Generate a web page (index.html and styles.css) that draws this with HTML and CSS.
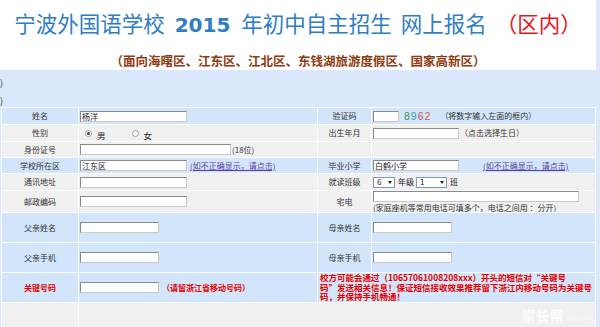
FILE: index.html
```html
<!DOCTYPE html>
<html lang="zh-CN">
<head>
  <meta charset="UTF-8">
  <title>宁波外国语学校 2015 年初中自主招生 网上报名</title>
  <link rel="stylesheet" href="styles.css">
</head>
<body>
  <div class="page">
    <div class="head">
      <h1 class="title">宁波外国语学校<b class="year">2015</b>年初中自主招生<span class="gap">网上报名</span><span class="zone">（区内）</span></h1>
      <p class="sub">（面向海曙区、江东区、江北区、东钱湖旅游度假区、国家高新区）</p>
    </div>
    <div class="band">
      <div>)</div>
      <div>)</div>
    </div>

    <div class="form">
      <!-- 第1行 -->
      <div class="cell lab blue">姓名</div>
      <div class="cell blue"><input class="ipt ipt-m" type="text" value="杨洋"></div>
      <div class="cell lab blue">验证码</div>
      <div class="cell blue">
        <input class="ipt ipt-code" type="text">
        <span class="code"><i class="c1">8</i><i class="c2">9</i><i class="c3">6</i><i class="c4">2</i></span>
        <span class="tip tip-code">（将数字输入左面的框内）</span>
      </div>

      <!-- 第2行 -->
      <div class="cell lab grey">性别</div>
      <div class="cell grey sex">
        <span class="radio on"></span><span class="sex-txt">男</span>
        <span class="radio radio-f"></span><span class="sex-txt">女</span>
      </div>
      <div class="cell lab grey">出生年月</div>
      <div class="cell grey"><input class="ipt ipt-date" type="text"><span class="tip">（点击选择生日）</span></div>

      <!-- 第3行 -->
      <div class="cell lab grey">身份证号</div>
      <div class="cell grey"><input class="ipt ipt-l" type="text"><span class="tip">(18位)</span></div>
      <div class="cell grey"></div>
      <div class="cell grey"></div>

      <!-- 第4行 -->
      <div class="cell lab blue">学校所在区</div>
      <div class="cell blue"><input class="ipt ipt-m" type="text" value="江东区"><a class="fix" href="#">(如不正确显示，请点击)</a></div>
      <div class="cell lab blue">毕业小学</div>
      <div class="cell blue"><input class="ipt ipt-date" type="text" value="白鹤小学"><a class="fix fix-r" href="#">(如不正确显示，请点击)</a></div>

      <!-- 第5行 -->
      <div class="cell lab grey">通讯地址</div>
      <div class="cell grey"><input class="ipt ipt-m" type="text"></div>
      <div class="cell lab grey">就读班级</div>
      <div class="cell grey">
        <span class="sel">6<i class="arr"></i></span><span class="unit">年级</span>
        <span class="sel sel-w">1<i class="arr"></i></span><span class="unit">班</span>
      </div>

      <!-- 第6行 -->
      <div class="cell lab grey">邮政编码</div>
      <div class="cell grey"><input class="ipt ipt-m" type="text"></div>
      <div class="cell lab grey">宅电</div>
      <div class="cell grey tel">
        <input class="ipt ipt-tel" type="text">
        <span class="tip-tel">(家庭座机等常用电话可填多个，电话之间用 ：分开)</span>
      </div>

      <!-- 家长 -->
      <div class="cell lab blue">父亲姓名</div>
      <div class="cell blue"><input class="ipt ipt-s" type="text"></div>
      <div class="cell lab blue">母亲姓名</div>
      <div class="cell blue"><input class="ipt ipt-s" type="text"></div>

      <div class="cell lab blue">父亲手机</div>
      <div class="cell blue"><input class="ipt ipt-s" type="text"></div>
      <div class="cell lab blue">母亲手机</div>
      <div class="cell blue"><input class="ipt ipt-s" type="text"></div>

      <div class="cell lab blue key">关键号码</div>
      <div class="cell blue"><input class="ipt ipt-s" type="text"><span class="key-tip">（请留浙江省移动号码）</span></div>
      <div class="cell blue notice span2">校方可能会通过（10657061008208xxx）开头的短信对“关键号<br>码”发送相关信息！保证短信接收效果推荐留下浙江内移动号码为关键号<br>码，并保持手机畅通！</div>

      <div class="cell grey"></div>
      <div class="cell grey span3"></div>
    </div>

    <div class="mark">家长帮<small>jzb.com</small></div>
  </div>
</body>
</html>
```

FILE: styles.css
```css
body {
  margin: 0;
  background: #dbe8fb;
  font-family: "Noto Sans CJK SC", "Liberation Sans", sans-serif;
  color: #222;
}
.page {
  position: relative;
  height: 327px;
  overflow: hidden;
}
.head {
  width: 596px;
  height: 70px;
  background: #fff;
}
.title {
  margin: 0;
  padding-top: 10px;
  font-size: 21.5px;
  font-weight: normal;
  line-height: 26px;
  color: #2f7dc4;
  text-align: center;
  white-space: nowrap;
}
.year {
  font-family: "DejaVu Sans", sans-serif;
  font-size: 20px;
  margin: 0 11px 0 10px;
}
.gap {
  margin-left: 9px;
}
.zone {
  margin-left: 9px;
  color: #e8141c;
}
.sub {
  margin: 15px 0 0;
  font-size: 12.5px;
  font-weight: bold;
  line-height: 16px;
  color: #8e3a12;
  text-align: center;
  white-space: nowrap;
}
.band {
  height: 37px;
  box-sizing: border-box;
  padding-top: 4px;
  font-size: 9px;
  line-height: 18px;
  color: #333;
}

/* 报名表 */
.form {
  display: grid;
  grid-template-columns: 76px 238px 53px 223px;
  grid-template-rows: 16px 16px 15px 15px 16px 21px 29px 29px 29px 30px;
  gap: 1px;
  padding: 1px;
  margin-left: 1px;
  width: 595px;
  box-sizing: border-box;
  background: #fbfcfe;
}
.cell {
  display: flex;
  align-items: center;
  padding: 0 1px;
  font-size: 8px;
  line-height: 10px;
  white-space: nowrap;
  overflow: hidden;
}
.blue {
  background: #d2e5fa;
}
.grey {
  background: #f0f0f0;
}
.lab {
  justify-content: center;
  color: #333;
}
.span2 {
  grid-column: span 2;
}
.span3 {
  grid-column: span 3;
}

.ipt {
  height: 11px;
  box-sizing: border-box;
  margin: 0;
  padding: 0 1px;
  border: 1px solid #c9c9c9;
  border-top-color: #8a8a8a;
  border-left-color: #8a8a8a;
  background: #fff;
  font-family: "Noto Sans CJK SC", sans-serif;
  font-size: 8px;
  color: #222;
  outline: none;
}
.ipt-m { width: 107px; }
.ipt-l { width: 151px; }
.ipt-s { width: 79px; }
.ipt-code { width: 26px; }
.ipt-date { width: 86px; }
.ipt-tel { width: 206px; }

.tip {
  margin-left: 1px;
  color: #333;
}
.tip-code {
  margin-left: 9px;
}
.code {
  margin-left: 5px;
  font-family: "Liberation Sans", sans-serif;
  font-size: 10.5px;
  letter-spacing: 1px;
}
.code i {
  font-style: normal;
}
.c1 { color: #3d9b52; }
.c2 { color: #3a9aa6; }
.c3 { color: #d2506e; }
.c4 { color: #c8643c; }

.fix {
  margin-left: 3px;
  color: #5b3c9e;
}
.fix-r {
  margin-left: 24px;
}

.sex {
  padding-left: 6px;
}
.radio {
  position: relative;
  width: 5px;
  height: 5px;
  border: 1px solid #a3a3a3;
  border-radius: 50%;
  background: #f7f7f7;
}
.radio.on::after {
  content: "";
  position: absolute;
  left: 1px;
  top: 1px;
  width: 3px;
  height: 3px;
  border-radius: 50%;
  background: #444;
}
.radio-f {
  margin-left: 26px;
}
.sex-txt {
  margin: 3px 0 0 5px;
  font-size: 8.5px;
}

.sel {
  display: inline-flex;
  align-items: center;
  justify-content: space-between;
  width: 22px;
  height: 11px;
  box-sizing: border-box;
  padding: 0 2px 0 3px;
  border: 1px solid #7f98b8;
  background: #fff;
  font-size: 8px;
}
.sel-w {
  width: 31px;
}
.arr {
  width: 0;
  height: 0;
  border-top: 3px solid #222;
  border-left: 2px solid transparent;
  border-right: 2px solid transparent;
}
.unit {
  margin: 0 2px 0 3px;
}

.tel {
  flex-direction: column;
  align-items: flex-start;
  justify-content: flex-start;
}
.tip-tel {
  margin-top: 1px;
  line-height: 9px;
  color: #333;
}

.key {
  color: #e60000;
  font-weight: bold;
}
.key-tip {
  margin-left: 3px;
  color: #e60000;
  font-weight: bold;
}
.notice {
  display: block;
  padding: 0 2px;
  font-size: 8.5px;
  line-height: 9.6px;
  font-weight: bold;
  color: #e60000;
  overflow: visible;
}

/* 水印 */
.mark {
  position: absolute;
  right: 8px;
  bottom: 2px;
  font-size: 14px;
  font-weight: bold;
  color: rgba(255, 255, 255, 0.85);
}
.mark small {
  margin-left: 3px;
  font-size: 7px;
  font-weight: normal;
  color: rgba(255, 255, 255, 0.6);
}
```
